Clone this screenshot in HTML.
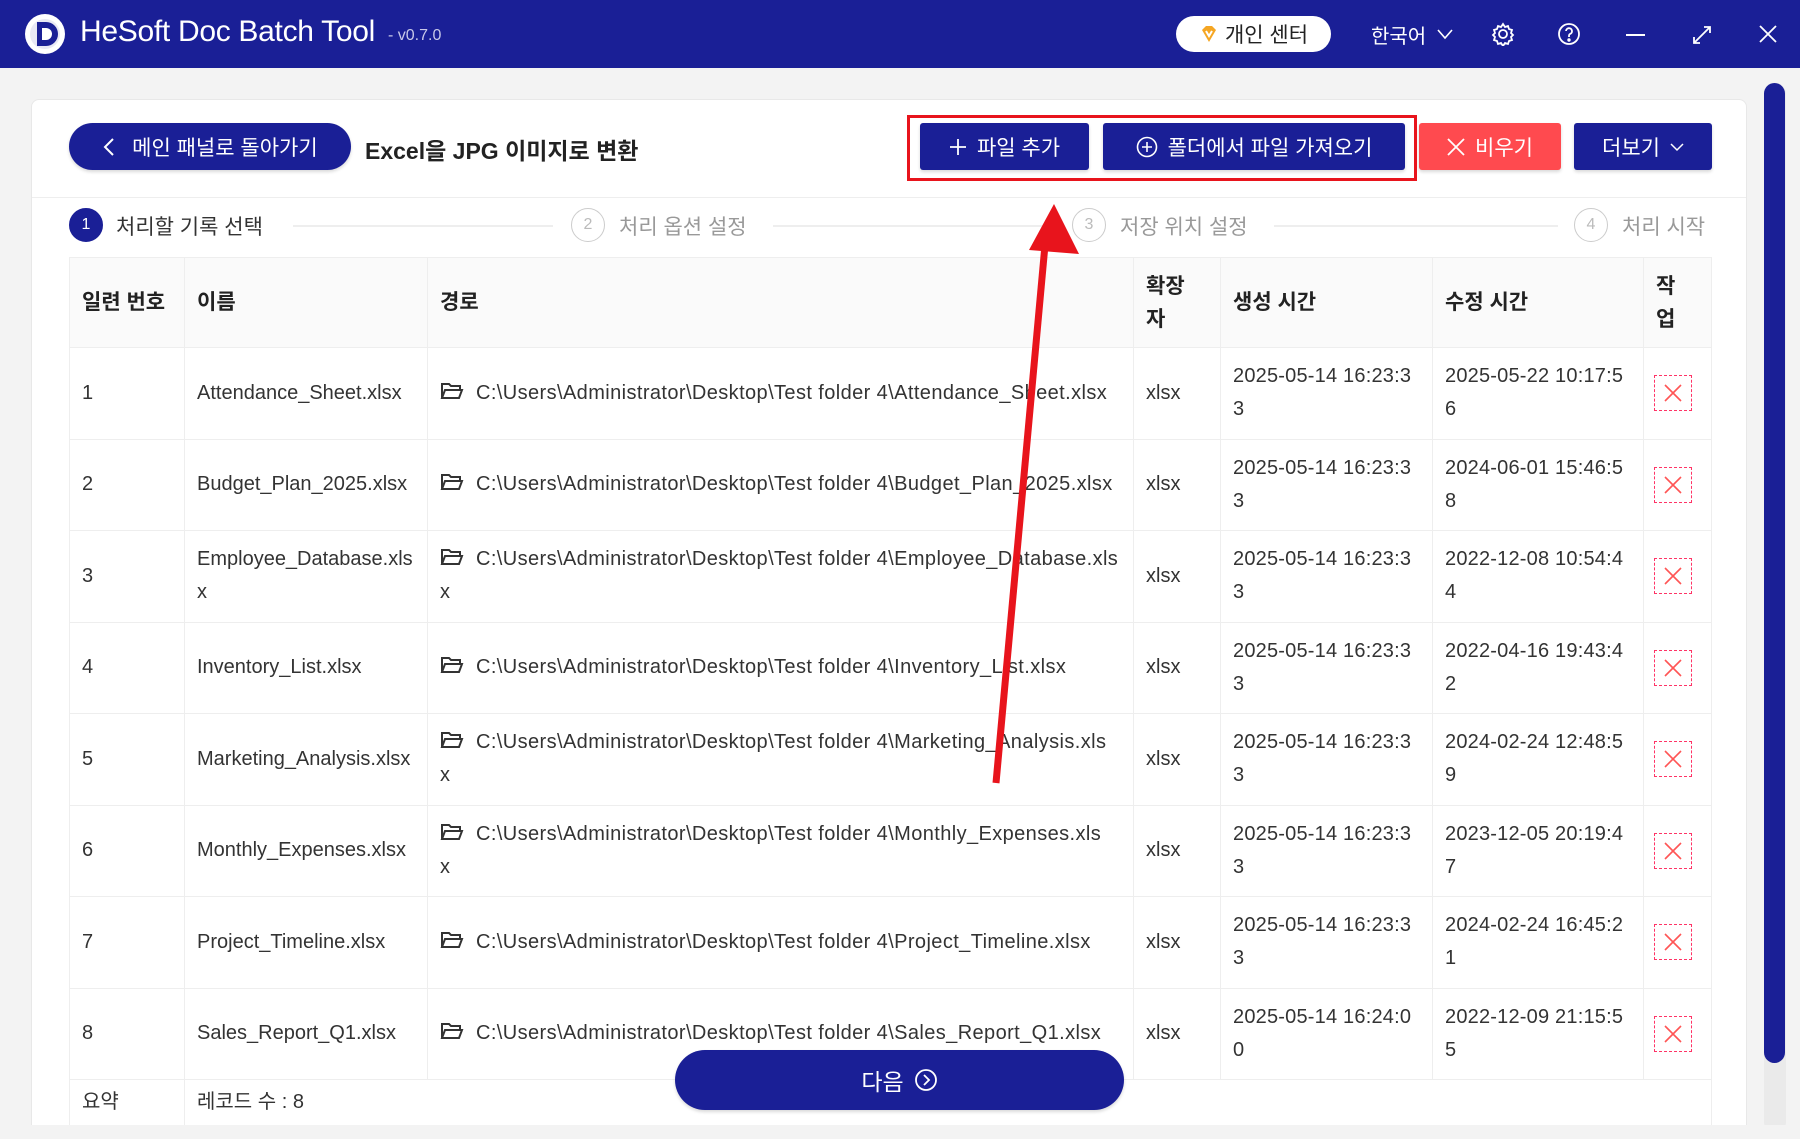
<!DOCTYPE html>
<html><head><meta charset="utf-8"><style>
*{box-sizing:border-box;margin:0;padding:0}
body{width:1800px;height:1139px;overflow:hidden;background:#f3f3f3;font-family:"Liberation Sans","Noto Sans CJK KR",sans-serif;color:#222;position:relative}
.abs{position:absolute}
.tb{left:0;top:0;width:1800px;height:68px;background:#1a1f96;color:#fff}
.card{left:31px;top:99px;width:1716px;height:1040px;background:#fff;border-radius:8px;border:1px solid #e8e8e8}
.btn{position:absolute;height:47px;background:#1a1f96;color:#fff;border-radius:3px;font-size:21px;display:flex;align-items:center;justify-content:center;gap:10px;box-shadow:0 2px 3px rgba(0,0,0,.15)}
.step{position:absolute;top:208px;width:34px;height:34px;border-radius:50%;border:1.5px solid #ccc;color:#bbb;font-size:16px;display:flex;align-items:center;justify-content:center}
.slabel{position:absolute;top:211px;font-size:21px;color:#999}
.sline{position:absolute;top:225px;height:2px;background:#eee}
table{position:absolute;left:69px;top:257px;width:1642px;border-collapse:collapse;font-size:20px;table-layout:fixed}
td,th{border:1px solid #eee;padding:0 12px;text-align:left;vertical-align:middle;line-height:33px;word-break:break-all}
th{background:#fafafa;height:90px;font-weight:bold;font-size:21px}
td{height:91.5px;color:#333}
td:nth-child(2){padding-right:14px}
td:nth-child(3){letter-spacing:.4px}
td:nth-child(5),td:nth-child(6){letter-spacing:.2px;padding-right:16px}
.x{width:38px;height:36px;border:1.5px dashed #f36;display:flex;align-items:center;justify-content:center;margin-left:-2px}
.fd{display:inline-block;vertical-align:-2px;margin-right:12px}
</style></head><body>
<div class="abs tb">
  <svg class="abs" style="left:24px;top:13px" width="42" height="42"><circle cx="21" cy="21" r="20" fill="#fff"/><circle cx="21" cy="21" r="15" fill="#e8e8f4"/><path d="M13 9h9a12 12 0 0 1 0 24h-9z" fill="#1a1f96"/><path d="M18 15h4a6 6 0 0 1 0 12h-4z" fill="#fff"/></svg>
  <div class="abs" style="left:80px;top:15px;font-size:30px;letter-spacing:-.3px">HeSoft Doc Batch Tool</div>
  <div class="abs" style="left:388px;top:27px;font-size:16px;color:#c8c8e8">- v0.7.0</div>
  <div class="abs" style="left:1176px;top:16px;width:155px;height:36px;background:#fff;border-radius:18px;color:#222;font-size:21px;display:flex;align-items:center;justify-content:center;gap:6px"><svg width="20" height="20"><path d="M3 6l4-4h6l4 4-7 12z" fill="#f5a623"/><path d="M7 7l3 5 3-5" stroke="#fff" stroke-width="2" fill="none"/></svg>개인 센터</div>
  <div class="abs" style="left:1371px;top:20px;font-size:20px">한국어</div>
  <svg class="abs" style="left:1437px;top:28px" width="16" height="12"><path d="M1 2l7 8 7-8" stroke="#fff" stroke-width="1.6" fill="none"/></svg>
  <svg class="abs" style="left:1491px;top:22px" width="24" height="24" fill="none" stroke="#fff" stroke-width="1.8"><circle cx="12" cy="12" r="4"/><path d="M12 2l2 3 3-1 1 3 3 1-1 3 2 2-2 2 1 3-3 1-1 3-3-1-2 3-2-3-3 1-1-3-3-1 1-3-2-2 2-2-1-3 3-1 1-3 3 1z"/></svg>
  <svg class="abs" style="left:1557px;top:22px" width="24" height="24" fill="none" stroke="#fff" stroke-width="1.8"><circle cx="12" cy="12" r="10"/><path d="M9 9a3 3 0 1 1 4 3c-1 .5-1 1-1 3"/><circle cx="12" cy="18" r=".8" fill="#fff"/></svg>
  <div class="abs" style="left:1626px;top:34px;width:19px;height:2px;background:#fff"></div>
  <svg class="abs" style="left:1692px;top:25px" width="20" height="20" stroke="#fff" stroke-width="1.8" fill="none"><path d="M2 18L18 2M12 2h6v6M2 12v6h6"/></svg>
  <svg class="abs" style="left:1759px;top:25px" width="18" height="18" stroke="#fff" stroke-width="1.8"><path d="M1 1l16 16M17 1L1 17"/></svg>
</div>
<div class="abs" style="left:1764px;top:83px;width:22px;height:1050px;background:#eaeaea;border-radius:11px"></div>
<div class="abs" style="left:1764px;top:83px;width:21px;height:980px;background:#1a1f96;border-radius:11px"></div>
<div class="abs card"></div>
<div class="abs" style="left:32px;top:197px;width:1714px;height:1px;background:#eee"></div>
<div class="btn" style="left:69px;top:123px;width:282px;border-radius:24px;font-size:21px"><svg width="14" height="20"><path d="M11 2L3 10l8 8" stroke="#fff" stroke-width="2" fill="none"/></svg>&nbsp;메인 패널로 돌아가기</div>
<div class="abs" style="left:365px;top:132px;font-size:23px;font-weight:bold">Excel을 JPG 이미지로 변환</div>
<div class="btn" style="left:920px;top:123px;width:169px"><svg width="18" height="18" stroke="#fff" stroke-width="1.8"><path d="M9 1v16M1 9h16"/></svg>파일 추가</div>
<div class="btn" style="left:1103px;top:123px;width:302px"><svg width="22" height="22" stroke="#fff" stroke-width="1.6" fill="none"><circle cx="11" cy="11" r="9.5"/><path d="M11 6v10M6 11h10"/></svg>폴더에서 파일 가져오기</div>
<div class="btn" style="left:1419px;top:123px;width:142px;background:#ff4a4f"><svg width="18" height="18" stroke="#fff" stroke-width="1.8"><path d="M1 1l16 16M17 1L1 17"/></svg>비우기</div>
<div class="btn" style="left:1574px;top:123px;width:138px">더보기 <svg width="14" height="10"><path d="M1 2l6 6 6-6" stroke="#fff" stroke-width="1.5" fill="none"/></svg></div>
<div class="abs" style="left:907px;top:115px;width:510px;height:66px;border:3px solid #e8141c"></div>
<div class="step" style="left:69px;background:#1a1f96;border-color:#1a1f96;color:#fff">1</div>
<div class="slabel" style="left:116px;color:#333">처리할 기록 선택</div>
<div class="sline" style="left:293px;width:260px"></div>
<div class="step" style="left:571px">2</div>
<div class="slabel" style="left:619px">처리 옵션 설정</div>
<div class="sline" style="left:773px;width:283px"></div>
<div class="step" style="left:1072px">3</div>
<div class="slabel" style="left:1120px">저장 위치 설정</div>
<div class="sline" style="left:1274px;width:284px"></div>
<div class="step" style="left:1574px">4</div>
<div class="slabel" style="left:1622px">처리 시작</div>
<table>
<colgroup><col style="width:115px"><col style="width:243px"><col style="width:706px"><col style="width:87px"><col style="width:212px"><col style="width:211px"><col style="width:68px"></colgroup>
<tr><th>일련 번호</th><th>이름</th><th>경로</th><th>확장<br>자</th><th>생성 시간</th><th>수정 시간</th><th>작<br>업</th></tr>
<tr><td>1</td><td>Attendance_Sheet.xlsx</td><td><svg class="fd" width="24" height="20" fill="none" stroke="#333" stroke-width="2"><path d="M2 17V3h7l2 2h9v4M2 17l3-8h17l-3 8z"/></svg>C:\Users\Administrator\Desktop\Test folder 4\Attendance_Sheet.xlsx</td><td>xlsx</td><td>2025-05-14 16:23:33</td><td>2025-05-22 10:17:56</td><td><div class="x"><svg width="20" height="20" stroke="#f55" stroke-width="1.6"><path d="M2 2l16 16M18 2L2 18"/></svg></div></td></tr>
<tr><td>2</td><td>Budget_Plan_2025.xlsx</td><td><svg class="fd" width="24" height="20" fill="none" stroke="#333" stroke-width="2"><path d="M2 17V3h7l2 2h9v4M2 17l3-8h17l-3 8z"/></svg>C:\Users\Administrator\Desktop\Test folder 4\Budget_Plan_2025.xlsx</td><td>xlsx</td><td>2025-05-14 16:23:33</td><td>2024-06-01 15:46:58</td><td><div class="x"><svg width="20" height="20" stroke="#f55" stroke-width="1.6"><path d="M2 2l16 16M18 2L2 18"/></svg></div></td></tr>
<tr><td>3</td><td>Employee_Database.xlsx</td><td><svg class="fd" width="24" height="20" fill="none" stroke="#333" stroke-width="2"><path d="M2 17V3h7l2 2h9v4M2 17l3-8h17l-3 8z"/></svg>C:\Users\Administrator\Desktop\Test folder 4\Employee_Database.xls<br>x</td><td>xlsx</td><td>2025-05-14 16:23:33</td><td>2022-12-08 10:54:44</td><td><div class="x"><svg width="20" height="20" stroke="#f55" stroke-width="1.6"><path d="M2 2l16 16M18 2L2 18"/></svg></div></td></tr>
<tr><td>4</td><td>Inventory_List.xlsx</td><td><svg class="fd" width="24" height="20" fill="none" stroke="#333" stroke-width="2"><path d="M2 17V3h7l2 2h9v4M2 17l3-8h17l-3 8z"/></svg>C:\Users\Administrator\Desktop\Test folder 4\Inventory_List.xlsx</td><td>xlsx</td><td>2025-05-14 16:23:33</td><td>2022-04-16 19:43:42</td><td><div class="x"><svg width="20" height="20" stroke="#f55" stroke-width="1.6"><path d="M2 2l16 16M18 2L2 18"/></svg></div></td></tr>
<tr><td>5</td><td>Marketing_Analysis.xlsx</td><td><svg class="fd" width="24" height="20" fill="none" stroke="#333" stroke-width="2"><path d="M2 17V3h7l2 2h9v4M2 17l3-8h17l-3 8z"/></svg>C:\Users\Administrator\Desktop\Test folder 4\Marketing_Analysis.xls<br>x</td><td>xlsx</td><td>2025-05-14 16:23:33</td><td>2024-02-24 12:48:59</td><td><div class="x"><svg width="20" height="20" stroke="#f55" stroke-width="1.6"><path d="M2 2l16 16M18 2L2 18"/></svg></div></td></tr>
<tr><td>6</td><td>Monthly_Expenses.xlsx</td><td><svg class="fd" width="24" height="20" fill="none" stroke="#333" stroke-width="2"><path d="M2 17V3h7l2 2h9v4M2 17l3-8h17l-3 8z"/></svg>C:\Users\Administrator\Desktop\Test folder 4\Monthly_Expenses.xls<br>x</td><td>xlsx</td><td>2025-05-14 16:23:33</td><td>2023-12-05 20:19:47</td><td><div class="x"><svg width="20" height="20" stroke="#f55" stroke-width="1.6"><path d="M2 2l16 16M18 2L2 18"/></svg></div></td></tr>
<tr><td>7</td><td>Project_Timeline.xlsx</td><td><svg class="fd" width="24" height="20" fill="none" stroke="#333" stroke-width="2"><path d="M2 17V3h7l2 2h9v4M2 17l3-8h17l-3 8z"/></svg>C:\Users\Administrator\Desktop\Test folder 4\Project_Timeline.xlsx</td><td>xlsx</td><td>2025-05-14 16:23:33</td><td>2024-02-24 16:45:21</td><td><div class="x"><svg width="20" height="20" stroke="#f55" stroke-width="1.6"><path d="M2 2l16 16M18 2L2 18"/></svg></div></td></tr>
<tr><td>8</td><td>Sales_Report_Q1.xlsx</td><td><svg class="fd" width="24" height="20" fill="none" stroke="#333" stroke-width="2"><path d="M2 17V3h7l2 2h9v4M2 17l3-8h17l-3 8z"/></svg>C:\Users\Administrator\Desktop\Test folder 4\Sales_Report_Q1.xlsx</td><td>xlsx</td><td>2025-05-14 16:24:00</td><td>2022-12-09 21:15:55</td><td><div class="x"><svg width="20" height="20" stroke="#f55" stroke-width="1.6"><path d="M2 2l16 16M18 2L2 18"/></svg></div></td></tr>
<tr><td style="height:46px">요약</td><td colspan="6" style="height:46px;letter-spacing:0">레코드 수 : 8</td></tr>
</table>
<div class="abs" style="left:0;top:1125px;width:1800px;height:14px;background:#f3f3f3"></div>
<div class="btn" style="left:675px;top:1050px;width:449px;height:60px;border-radius:30px;font-size:23px">다음 <svg width="24" height="24" fill="none" stroke="#fff" stroke-width="1.8"><circle cx="12" cy="12" r="10"/><path d="M10 7l5 5-5 5"/></svg></div>
<svg class="abs" style="left:0;top:0" width="1800" height="1139"><path d="M996 783L1045 245" stroke="#e8141c" stroke-width="7" fill="none"/><path d="M1054 204L1029 250L1079 254z" fill="#e8141c"/></svg>
</body></html>
